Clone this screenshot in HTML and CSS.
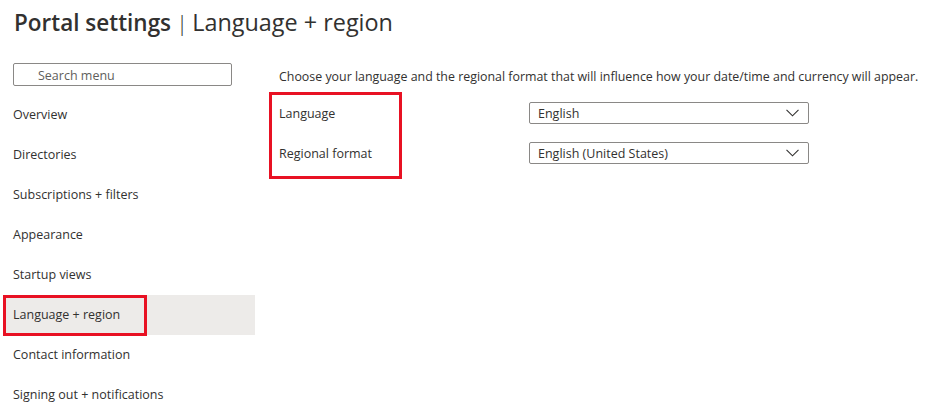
FILE: index.html
```html
<!DOCTYPE html>
<html lang="en">
<head>
<meta charset="utf-8">
<title>Portal settings | Language + region</title>
<link rel="stylesheet" href="styles.css">
</head>
<body>
<header class="page-header">
  <h1 class="title"><span class="title-main">Portal settings</span><span class="title-sep">|</span><span class="title-sub">Language + region</span></h1>
</header>
<div class="layout">
  <nav class="sidebar">
    <div class="search-box"><span class="search-placeholder">Search menu</span></div>
    <ul class="nav-list">
      <li class="nav-item">Overview</li>
      <li class="nav-item">Directories</li>
      <li class="nav-item">Subscriptions + filters</li>
      <li class="nav-item">Appearance</li>
      <li class="nav-item">Startup views</li>
      <li class="nav-item nav-item-active"><span class="highlight-box">Language + region</span></li>
      <li class="nav-item">Contact information</li>
      <li class="nav-item">Signing out + notifications</li>
    </ul>
  </nav>
  <main class="content">
    <p class="description">Choose your language and the regional format that will influence how your date/time and currency will appear.</p>
    <div class="form">
      <div class="label-box">
        <div class="field-label">Language</div>
        <div class="field-label">Regional format</div>
      </div>
      <div class="dropdowns">
        <div class="dropdown"><span class="dropdown-value">English</span><svg class="chevron" width="13" height="8" viewBox="0 0 13 8"><polyline points="0.5,0.8 6.5,6.8 12.5,0.8" fill="none" stroke="#323130" stroke-width="1.1"/></svg></div>
        <div class="dropdown"><span class="dropdown-value">English (United States)</span><svg class="chevron" width="13" height="8" viewBox="0 0 13 8"><polyline points="0.5,0.8 6.5,6.8 12.5,0.8" fill="none" stroke="#323130" stroke-width="1.1"/></svg></div>
      </div>
    </div>
  </main>
</div>
</body>
</html>
```

FILE: styles.css
```css
* { box-sizing: border-box; }
html, body { margin: 0; padding: 0; background: #ffffff; }
body {
  font-family: "Open Sans", "Noto Sans", "Liberation Sans", sans-serif;
  color: #323130;
  font-size: 13px;
  width: 926px;
  height: 420px;
  overflow: hidden;
}
.page-header {
  height: 52px;
  padding: 8px 0 0 14px;
}
.title {
  margin: 0;
  font-size: 22.5px;
  line-height: 28px;
  font-weight: 400;
  color: #323130;
  white-space: nowrap;
}
.title-main { font-weight: 600; }
.title-sep { margin: 0 4px 0 5px; font-weight: 300; }
.title-sub { font-weight: 400; font-size: 23.4px; }

.layout { display: flex; }
.sidebar {
  width: 252px;
  margin-left: 3px;
  flex: none;
}
.search-box {
  margin: 11px 0 0 10px;
  width: 219px;
  height: 23px;
  border: 1px solid #8a8886;
  border-radius: 2px;
  display: flex;
  align-items: center;
  padding: 1px 0 0 24px;
}
.search-placeholder { color: #605e5c; font-size: 12.5px; }
.nav-list {
  list-style: none;
  margin: 9px 0 0 0;
  padding: 0;
}
.nav-item {
  height: 40px;
  display: flex;
  align-items: center;
  padding: 0 0 2px 10px;
  font-size: 12.5px;
  color: #323130;
}
.nav-item-active {
  background: #edebe9;
  padding: 0;
  align-items: stretch;
}
.highlight-box {
  border: 3px solid #e81123;
  width: 144px;
  display: flex;
  align-items: center;
  padding: 0 0 3px 7px;
  height: 41px;
}

.content {
  flex: 1;
  padding-left: 24px;
}
.description {
  margin: 17px 0 0 0;
  line-height: 16px;
  font-size: 12.4px;
  white-space: nowrap;
}
.form {
  display: flex;
  margin-top: 7px;
  margin-left: -10px;
}
.label-box {
  width: 133px;
  height: 87px;
  border: 3px solid #e81123;
  padding: 9px 0 0 7px;
  display: flex;
  flex-direction: column;
  gap: 20px;
}
.field-label {
  line-height: 20px;
  font-size: 12.5px;
  white-space: nowrap;
}
.dropdowns {
  margin-left: 127px;
  padding-top: 10px;
  display: flex;
  flex-direction: column;
  gap: 18px;
}
.dropdown {
  width: 280px;
  height: 22px;
  border: 1px solid #8a8886;
  border-radius: 2px;
  display: flex;
  align-items: center;
  justify-content: space-between;
  padding: 0 9px 0 8px;
}
.dropdown-value { font-size: 12.5px; color: #323130; }
.chevron { display: block; }
```
